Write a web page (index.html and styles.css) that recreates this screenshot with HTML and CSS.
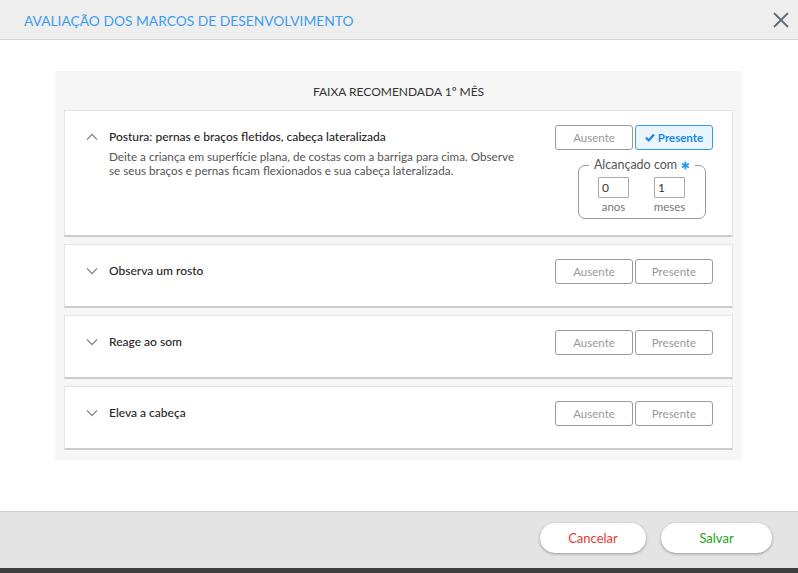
FILE: index.html
```html
<!DOCTYPE html>
<html lang="pt-BR">
<head>
<meta charset="utf-8">
<title>Avaliação dos marcos de desenvolvimento</title>
<link rel="stylesheet" href="styles.css">
</head>
<body>
<div class="modal">
  <header class="modal-header">
    <h1 class="modal-title">AVALIAÇÃO DOS MARCOS DE DESENVOLVIMENTO</h1>
    <button class="close-btn" aria-label="Fechar">
      <svg width="16" height="16" viewBox="0 0 16 16"><path d="M1.5 1.5 L14.5 14.5 M14.5 1.5 L1.5 14.5" stroke="#5f6b78" stroke-width="1.8" fill="none" stroke-linecap="round"/></svg>
    </button>
  </header>
  <main class="modal-body">
    <section class="panel">
      <div class="panel-title">FAIXA RECOMENDADA 1º MÊS</div>
      <div class="cards">
        <div class="card">
          <div class="card-row">
            <div class="card-left">
              <svg class="chev" width="12" height="8" viewBox="0 0 12 8"><path d="M1 6.5 L6 1.5 L11 6.5" stroke="#8a8a8a" stroke-width="1.3" fill="none"/></svg>
              <div class="card-text">
                <div class="card-title">Postura: pernas e braços fletidos, cabeça lateralizada</div>
                <div class="card-desc">Deite a criança em superfície plana, de costas com a barriga para cima. Observe se seus braços e pernas ficam flexionados e sua cabeça lateralizada.</div>
              </div>
            </div>
            <div class="card-right">
              <div class="btn-group">
                <button class="opt">Ausente</button>
                <button class="opt active">
                  <svg width="10" height="9" viewBox="0 0 10 9"><path d="M1 4.6 L3.8 7.3 L9 1.6" stroke="#1e88e5" stroke-width="2.2" fill="none"/></svg>
                  Presente
                </button>
              </div>
              <div class="reached">
                <span class="legend">Alcançado com <svg class="req" width="9" height="9" viewBox="0 0 10 10"><path d="M5 0.5 V9.5 M1.1 2.75 L8.9 7.25 M8.9 2.75 L1.1 7.25" stroke="#2196f3" stroke-width="1.8" fill="none"/></svg></span>
                <div class="reached-fields">
                  <div class="field">
                    <input class="num" type="text" value="0">
                    <span class="field-label">anos</span>
                  </div>
                  <div class="field">
                    <input class="num" type="text" value="1">
                    <span class="field-label">meses</span>
                  </div>
                </div>
              </div>
            </div>
          </div>
        </div>

        <div class="card">
          <div class="card-row collapsed">
            <div class="card-left">
              <svg class="chev" width="12" height="8" viewBox="0 0 12 8"><path d="M1 1.5 L6 6.5 L11 1.5" stroke="#8a8a8a" stroke-width="1.3" fill="none"/></svg>
              <div class="card-text"><div class="card-title">Observa um rosto</div></div>
            </div>
            <div class="card-right">
              <div class="btn-group">
                <button class="opt">Ausente</button>
                <button class="opt">Presente</button>
              </div>
            </div>
          </div>
        </div>

        <div class="card">
          <div class="card-row collapsed">
            <div class="card-left">
              <svg class="chev" width="12" height="8" viewBox="0 0 12 8"><path d="M1 1.5 L6 6.5 L11 1.5" stroke="#8a8a8a" stroke-width="1.3" fill="none"/></svg>
              <div class="card-text"><div class="card-title">Reage ao som</div></div>
            </div>
            <div class="card-right">
              <div class="btn-group">
                <button class="opt">Ausente</button>
                <button class="opt">Presente</button>
              </div>
            </div>
          </div>
        </div>

        <div class="card">
          <div class="card-row collapsed">
            <div class="card-left">
              <svg class="chev" width="12" height="8" viewBox="0 0 12 8"><path d="M1 1.5 L6 6.5 L11 1.5" stroke="#8a8a8a" stroke-width="1.3" fill="none"/></svg>
              <div class="card-text"><div class="card-title">Eleva a cabeça</div></div>
            </div>
            <div class="card-right">
              <div class="btn-group">
                <button class="opt">Ausente</button>
                <button class="opt">Presente</button>
              </div>
            </div>
          </div>
        </div>
      </div>
    </section>
  </main>
  <footer class="modal-footer">
    <button class="pill cancel">Cancelar</button>
    <button class="pill save">Salvar</button>
  </footer>
  <div class="under-strip"></div>
</div>
</body>
</html>
```

FILE: styles.css
```css
* { box-sizing: border-box; }
html, body { margin: 0; padding: 0; }
body {
  font-family: Lato, "Open Sans", "Liberation Sans", sans-serif;
  background: #ffffff;
  color: #333;
  width: 798px;
  height: 573px;
  overflow: hidden;
}
button { font-family: inherit; cursor: pointer; }

.modal {
  display: flex;
  flex-direction: column;
  height: 573px;
}

.modal-header {
  height: 40px;
  flex: 0 0 40px;
  background: #eeeeee;
  border-bottom: 1px solid #d4d4d4;
  display: flex;
  align-items: center;
  justify-content: space-between;
  padding: 0 9px 0 24px;
}
.modal-title {
  margin: 0;
  font-size: 13.8px;
  font-weight: normal;
  color: #3d9cf0;
  line-height: 18px;
  padding-top: 2px;
}
.close-btn {
  background: none;
  border: 0;
  padding: 0;
  width: 16px;
  height: 16px;
  margin-top: 1px;
  display: flex;
}

.modal-body {
  flex: 1 1 auto;
  padding: 31px 56px 0 55px;
}

.panel {
  background: #f6f6f6;
  padding: 0 9px 10px;
}
.panel-title {
  height: 39px;
  display: flex;
  align-items: center;
  justify-content: center;
  font-size: 12px;
  color: #333;
  padding-top: 2px;
}

.cards {
  display: flex;
  flex-direction: column;
  gap: 7px;
}
.card {
  background: #ffffff;
  border: 1px solid #e4e4e4;
  border-bottom: 2px solid #cccccc;
  padding: 14px 19px 16px 21px;
}
.card-row {
  display: flex;
  justify-content: space-between;
  align-items: flex-start;
}
.card-row.collapsed { min-height: 31px; }

.card-left {
  display: flex;
  align-items: flex-start;
}
.chev {
  flex: 0 0 12px;
  margin: 8px 11px 0 0;
}
.card-text { padding-top: 2px; }
.card-title {
  font-size: 12px;
  line-height: 20px;
  color: #262626;
  font-weight: 500;
}
.card-desc {
  margin-top: 2px;
  font-size: 11.7px;
  line-height: 14px;
  color: #555;
  max-width: 416px;
}

.card-right {
  display: flex;
  flex-direction: column;
  align-items: flex-end;
}
.btn-group {
  display: flex;
  gap: 2px;
}
.opt {
  width: 78px;
  height: 25px;
  border: 1px solid #9a9a9a;
  border-radius: 3px;
  background: #ffffff;
  color: #999;
  font-size: 11.5px;
  padding: 0;
  display: flex;
  align-items: center;
  justify-content: center;
  gap: 3px;
}
.opt.active {
  border-color: #3a9bf0;
  background: #eaf5fe;
  color: #1e88e5;
  font-weight: bold;
}

.reached {
  position: relative;
  width: 128px;
  height: 54px;
  margin: 15px 7px 0 0;
  border: 1px solid #9a9a9a;
  border-radius: 7px;
  padding: 11px 0 0 19px;
}
.legend {
  position: absolute;
  top: -9px;
  left: 50%;
  transform: translateX(-50%);
  background: #ffffff;
  padding: 0 5px;
  font-size: 12.5px;
  line-height: 16px;
  color: #555;
  white-space: nowrap;
  display: flex;
  align-items: center;
  gap: 4px;
}
.req { display: block; margin-top: 1px; }
.reached-fields {
  display: flex;
  gap: 25px;
}
.field {
  width: 31px;
  display: flex;
  flex-direction: column;
  align-items: center;
}
.num {
  width: 31px;
  height: 21px;
  border: 1px solid #aaaaaa;
  border-radius: 1px;
  padding: 0 3px;
  font-family: inherit;
  font-size: 12px;
  color: #333;
  outline: none;
}
.field-label {
  margin-top: 2px;
  font-size: 11.5px;
  line-height: 14px;
  color: #777;
  white-space: nowrap;
}

.modal-footer {
  flex: 0 0 57px;
  height: 57px;
  background: #e4e4e4;
  border-top: 1px solid #cfcfcf;
  display: flex;
  justify-content: flex-end;
  align-items: flex-start;
  gap: 15px;
  padding: 11px 26px 0 0;
}
.pill {
  height: 30px;
  border: 0;
  border-radius: 15px;
  background: #ffffff;
  box-shadow: 0 1px 3px rgba(0,0,0,0.35);
  font-size: 13px;
  padding: 0;
}
.pill.cancel { width: 106px; color: #e53935; }
.pill.save { width: 111px; color: #21a121; }

.under-strip {
  flex: 0 0 5px;
  height: 5px;
  background: #3e3e3e;
}
```
